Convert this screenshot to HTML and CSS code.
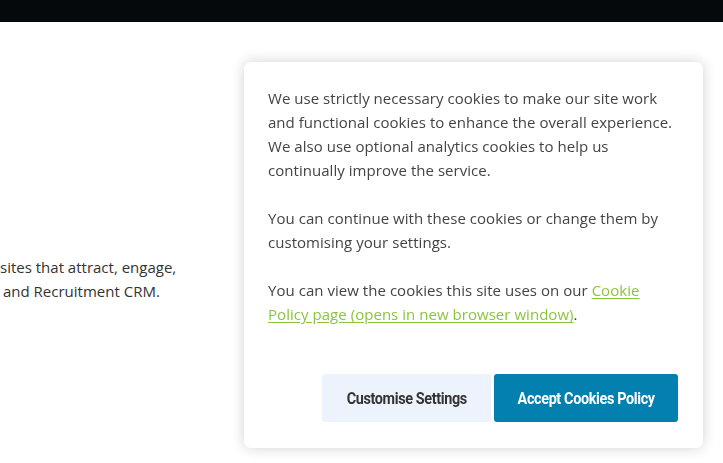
FILE: index.html
```html
<!DOCTYPE html>
<html lang="en">
<head>
<meta charset="utf-8">
<title>Cookies</title>
<link rel="stylesheet" href="styles.css">
</head>
<body>
<header class="topbar"></header>
<main class="hero">
  <p class="hero-text"><span class="l1">sites that attract, engage,</span><br><span class="l2">and Recruitment CRM.</span></p>
</main>
<div class="cookie-card" role="dialog" aria-label="Cookie consent">
  <p>We use strictly necessary cookies to make our site work and functional cookies to enhance the overall experience. We also use optional analytics cookies to help us continually improve the service.</p>
  <p>You can continue with these cookies or change them by customising your settings.</p>
  <p>You can view the cookies this site uses on our <a href="#" class="link">Cookie Policy page (opens in new browser window)</a>.</p>
  <div class="actions">
    <button class="btn btn-light"><span class="btn-label">Customise Settings</span></button>
    <button class="btn btn-primary"><span class="btn-label">Accept Cookies Policy</span></button>
  </div>
</div>
</body>
</html>
```
FILE: styles.css
```css
html, body {
  margin: 0;
  padding: 0;
  background: #ffffff;
  overflow: hidden;
}
body {
  width: 723px;
  height: 463px;
  font-family: "Open Sans", "Noto Sans", sans-serif;
}
.topbar {
  height: 22px;
  background: #05090c;
}
.hero {
  padding-top: 233px;
}
.hero-text {
  margin: 0;
  font-size: 15px;
  line-height: 24px;
  color: #333333;
}
.l2 {
  padding-left: 3px;
}
.cookie-card {
  position: fixed;
  right: 20px;
  bottom: 15px;
  width: 459px;
  box-sizing: border-box;
  background: #ffffff;
  border-radius: 7px;
  box-shadow: 0 0 14px rgba(0, 0, 0, 0.18);
  padding: 24px 25px 26px 24px;
  color: #444444;
  font-size: 15px;
  line-height: 24px;
  letter-spacing: 0.04px;
}
.cookie-card p {
  margin: 0 0 24px 0;
}
.link {
  color: #8cc43e;
  text-decoration: underline;
  text-underline-offset: 2px;
}
.actions {
  display: flex;
  justify-content: flex-end;
  gap: 3px;
  margin-top: 48px;
}
.btn {
  height: 48px;
  border: none;
  border-radius: 3px;
  padding: 0;
  display: flex;
  align-items: center;
  justify-content: center;
  font-family: "Roboto", "Liberation Sans", sans-serif;
  font-weight: 700;
  font-size: 16px;
  letter-spacing: -0.4px;
  cursor: pointer;
}
.btn-label {
  display: inline-block;
  transform: scaleX(0.9);
  white-space: nowrap;
}
.btn-light {
  width: 169px;
  background: #edf3fc;
  color: #333333;
}
.btn-primary {
  width: 184px;
  background: #037fb0;
  color: #ffffff;
}
```
